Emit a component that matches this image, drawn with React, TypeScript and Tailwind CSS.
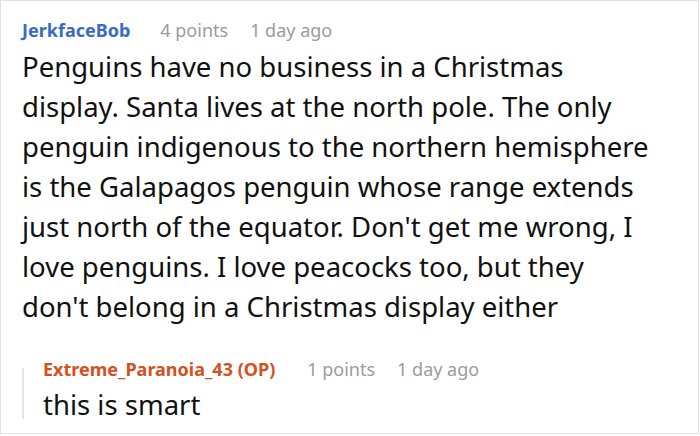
import React from 'react';

export default function App() {
  return (
    <div className="w-[700px] h-[436px] bg-white" style={{ fontFamily: '"Noto Sans", "Open Sans", sans-serif' }}>
      <div className="w-[699px] h-[434px] border border-[#e2e2e2] pl-[21px] pt-[16px]">
        {/* Comment header */}
        <div className="flex items-center gap-[22px] h-[26px] text-[18px] leading-[26px]">
          <span className="font-bold text-[#3a6ac2] mr-[8px]">JerkfaceBob</span>
          <span className="text-[#9b9b9b]">4 points</span>
          <span className="text-[#9b9b9b]">1 day ago</span>
        </div>
        <p className="mt-[4px] w-[628px] text-[27.5px] leading-[40px] text-[#111]">
          Penguins have no business in a Christmas display. Santa lives at the north pole. The only penguin indigenous to the northern hemisphere is the Galapagos penguin whose range extends just north of the equator. Don't get me wrong, I love penguins. I love peacocks too, but they don't belong in a Christmas display either
        </p>

        {/* Reply */}
        <div className="mt-[29px] flex">
          <div className="w-[2px] bg-[#e4e4e4] mt-[12px] mb-[6px] mr-[19px]" />
          <div>
            <div className="flex items-center gap-[22px] h-[26px] text-[18px] leading-[26px]">
              <span className="font-bold text-[#d5501f] mr-[10px]">Extreme_Paranoia_43 (OP)</span>
              <span className="text-[#9b9b9b]">1 points</span>
              <span className="text-[#9b9b9b]">1 day ago</span>
            </div>
            <p className="mt-[3px] text-[27.5px] leading-[40px] text-[#111]">this is smart</p>
          </div>
        </div>
      </div>
    </div>
  );
}
